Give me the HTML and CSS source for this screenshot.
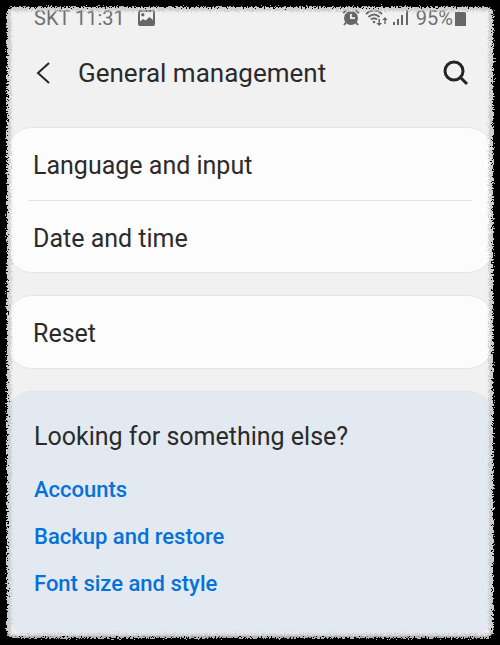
FILE: index.html
```html
<!DOCTYPE html>
<html lang="en">
<head>
  <meta charset="utf-8">
  <meta name="viewport" content="width=device-width, initial-scale=1">
  <title>General management</title>
  <link rel="stylesheet" href="styles.css">
</head>
<body>
  <div class="screen">
    <div class="status">
      <span>SKT 11:31</span>
      <svg class="picture" width="17" height="17" viewBox="0 0 17 17" aria-hidden="true">
        <path fill-rule="evenodd" d="M2 0h13q2 0 2 2v12q0 2-2 2H2q-2 0-2-2V2q0-2 2-2zM2 2v9.500l3-2.500 2.500 1.500 4-3.500 3.500 3V2zM4.800 3a1.700 1.700 0 1 1 0 3.400 1.700 1.700 0 0 1 0-3.400z"/>
      </svg>
      <div class="indicators">
        <svg width="18" height="18" viewBox="0 0 18 18" aria-hidden="true">
          <path fill-rule="evenodd" d="M9 2a7 7 0 1 1 0 14A7 7 0 0 1 9 2zm-1 3v5h5V8.300H9.800V5z"/>
          <path class="line" d="M1 4l4-3.500M17 4l-4-3.500M4 13.500l-2 2.500M14 13.500l2 2.500"/>
        </svg>
        <svg width="23" height="18" viewBox="0 0 23 18" aria-hidden="true">
          <path class="line" d="M1 5q8-7.500 16 0M3.500 8q5.500-5 11 0M6 10.500q3-2.500 6 0"/>
          <circle cx="9" cy="13" r="1.300"/>
          <path d="M13.500 10h1.500v4h2L14.200 17l-2.800-3h2.100zM19.300 15h1.400v-4h2L20 8l-2.700 3h2z"/>
        </svg>
        <svg class="signal" width="16" height="18" viewBox="0 0 16 18" aria-hidden="true">
          <path d="M0 13h2v3H0zM4 10h2v6H4zM8 6h2v10H8zM13 1h2v15h-2z"/>
        </svg>
        <span class="charge">95%</span>
        <svg width="11" height="18" viewBox="0 0 11 18" aria-hidden="true">
          <path d="M0 3h11v14H0z"/>
        </svg>
      </div>
    </div>

    <header class="bar">
      <button class="icon" type="button" aria-label="Back">
        <svg width="16" height="24" viewBox="0 0 16 24" aria-hidden="true">
          <path d="M15 2L4 12l11 10"/>
        </svg>
      </button>
      <h1>General management</h1>
      <button class="icon search" type="button" aria-label="Search">
        <svg width="26" height="26" viewBox="0 0 26 26" aria-hidden="true">
          <circle cx="11" cy="11" r="9"/>
          <path d="M17.500 17.500l6.500 6.500"/>
        </svg>
      </button>
    </header>

    <main>
      <nav class="card">
        <a href="#language">Language and input</a>
        <a href="#date">Date and time</a>
      </nav>
      <nav class="card">
        <a href="#reset">Reset</a>
      </nav>
      <section class="card more">
        <h2>Looking for something else?</h2>
        <a href="#accounts">Accounts</a>
        <a href="#backup">Backup and restore</a>
        <a href="#font">Font size and style</a>
      </section>
    </main>
  </div>

  <div class="edge" aria-hidden="true"></div>
  <svg class="defs" width="0" height="0" aria-hidden="true">
    <filter id="rough" x="0" y="0" width="100%" height="100%" color-interpolation-filters="sRGB">
      <feTurbulence type="fractalNoise" baseFrequency="0.6" numOctaves="3" seed="4"/>
      <feDisplacementMap in="SourceGraphic" scale="8" xChannelSelector="R" yChannelSelector="G"/>
      <feGaussianBlur stdDeviation="0.4"/>
    </filter>
  </svg>
</body>
</html>
```
FILE: styles.css
```css
* {
  box-sizing: border-box;
}

body {
  position: relative;
  min-height: 100vh;
  margin: 0;
  padding: 7px 6px 9px;
  overflow: hidden;
  display: flex;
  background: #000;
  color: #2b2b2b;
  font-family: Roboto, "Liberation Sans", sans-serif;
}

.screen {
  flex: 1;
  display: flex;
  flex-direction: column;
  border-radius: 8px;
  background: #f1f1f1;
}

.status {
  display: flex;
  align-items: center;
  height: 22px;
  padding: 0 28px;
  color: #707070;
  font-size: 20px;
  line-height: 22px;
}

.status svg {
  fill: #666;
}

.status .line {
  fill: none;
  stroke: #666;
  stroke-width: 2;
}

.picture {
  margin-left: 13px;
}

.indicators {
  display: flex;
  align-items: center;
  margin-left: auto;
}

.indicators svg + svg {
  margin-left: 5px;
}

.charge {
  margin: 0 2px 0 7px;
}

.bar {
  display: flex;
  align-items: center;
  height: 88px;
  padding: 0 25px 0 28px;
}

h1,
h2 {
  margin: 0;
  font-size: 26px;
  font-weight: 400;
  line-height: 32px;
}

h1 {
  margin-left: 28px;
}

.icon {
  display: flex;
  padding: 0;
  border: 0;
  background: none;
}

.icon svg {
  fill: none;
  stroke: #252525;
  stroke-width: 2;
}

.search {
  margin-left: auto;
}

.search svg {
  stroke-width: 3;
}

main {
  flex: 1;
  display: flex;
  flex-direction: column;
  gap: 22px;
  margin-top: 10px;
}

.card {
  border: 1px solid #e4e4e4;
  border-radius: 26px;
  background: #fcfcfc;
}

.card a {
  display: block;
  color: #2b2b2b;
  font-size: 25px;
  line-height: 32px;
  text-decoration: none;
}

nav a {
  margin: 0 21px;
  padding: 22px 5px 18px;
}

nav a + a {
  padding-bottom: 17px;
  border-top: 1px solid #e4e4e4;
}

.more {
  flex: 1;
  padding: 29px 27px 24px;
  background: #e3e9f0;
}

.more h2 {
  margin-bottom: 14px;
  font-size: 25px;
}

.more a {
  padding: 7px 0 8px;
  color: #0672d9;
  font-size: 22px;
  font-weight: 500;
}

.edge {
  position: absolute;
  inset: -12px;
  border: 19px solid #000;
  border-radius: 24px;
  box-shadow: inset 0 0 2px 4px rgb(200 200 200 / 90%);
  filter: url(#rough);
  pointer-events: none;
}

.defs {
  position: absolute;
}
```
